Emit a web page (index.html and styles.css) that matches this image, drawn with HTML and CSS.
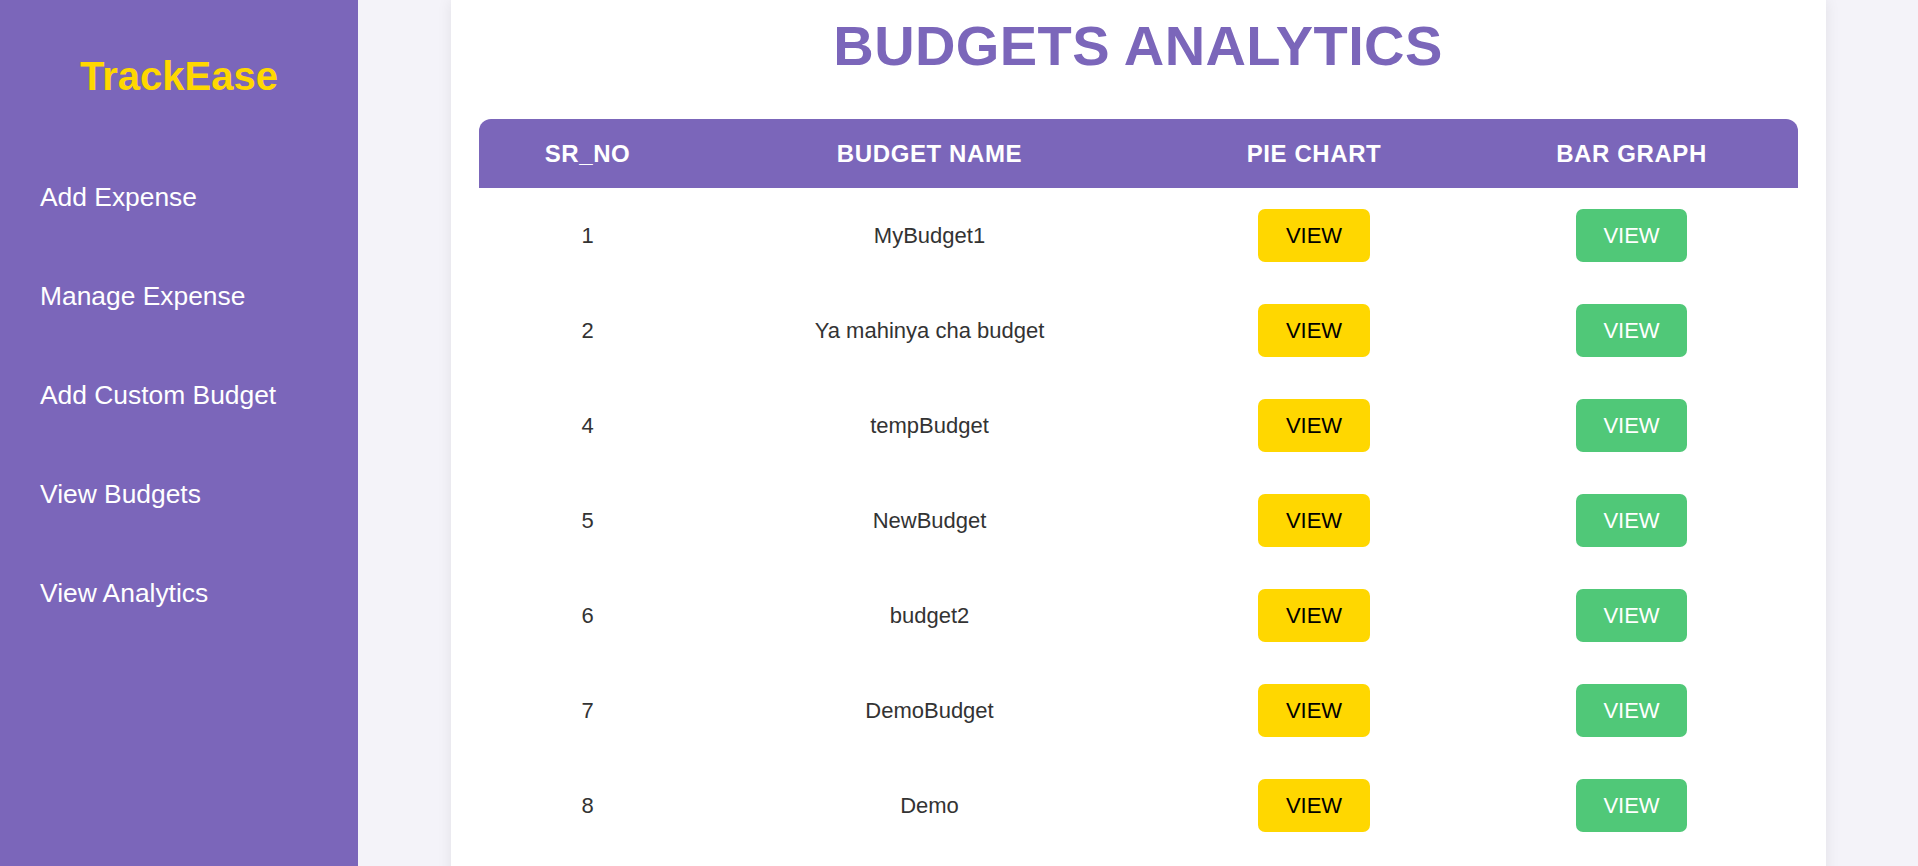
FILE: index.html
```html
<!DOCTYPE html>
<html lang="en">
<head>
<meta charset="UTF-8">
<title>TrackEase - Budgets Analytics</title>
<link rel="stylesheet" href="styles.css">
</head>
<body>
<div class="layout">
  <aside class="sidebar">
    <h2 class="logo">TrackEase</h2>
    <nav class="nav">
      <a href="#">Add Expense</a>
      <a href="#">Manage Expense</a>
      <a href="#">Add Custom Budget</a>
      <a href="#">View Budgets</a>
      <a href="#">View Analytics</a>
    </nav>
  </aside>
  <main class="main">
    <section class="card">
      <h1 class="title">BUDGETS ANALYTICS</h1>
      <table class="budget-table">
        <colgroup>
          <col class="c1"><col class="c2"><col class="c3"><col class="c4">
        </colgroup>
        <thead>
          <tr><th>SR_NO</th><th>BUDGET NAME</th><th>PIE CHART</th><th>BAR GRAPH</th></tr>
        </thead>
        <tbody>
          <tr><td>1</td><td>MyBudget1</td><td><button class="btn btn-pie">VIEW</button></td><td><button class="btn btn-bar">VIEW</button></td></tr>
          <tr><td>2</td><td>Ya mahinya cha budget</td><td><button class="btn btn-pie">VIEW</button></td><td><button class="btn btn-bar">VIEW</button></td></tr>
          <tr><td>4</td><td>tempBudget</td><td><button class="btn btn-pie">VIEW</button></td><td><button class="btn btn-bar">VIEW</button></td></tr>
          <tr><td>5</td><td>NewBudget</td><td><button class="btn btn-pie">VIEW</button></td><td><button class="btn btn-bar">VIEW</button></td></tr>
          <tr><td>6</td><td>budget2</td><td><button class="btn btn-pie">VIEW</button></td><td><button class="btn btn-bar">VIEW</button></td></tr>
          <tr><td>7</td><td>DemoBudget</td><td><button class="btn btn-pie">VIEW</button></td><td><button class="btn btn-bar">VIEW</button></td></tr>
          <tr><td>8</td><td>Demo</td><td><button class="btn btn-pie">VIEW</button></td><td><button class="btn btn-bar">VIEW</button></td></tr>
        </tbody>
      </table>
    </section>
  </main>
</div>
</body>
</html>
```

FILE: styles.css
```css
* { box-sizing: border-box; }

html, body {
  margin: 0;
  padding: 0;
  height: 100%;
  overflow: hidden;
}

body {
  font-family: "Liberation Sans", Arial, sans-serif;
  background: #f4f3f9;
  color: #333;
}

.layout {
  display: flex;
  height: 866px;
}

.sidebar {
  width: 358px;
  flex: 0 0 358px;
  background: #7b66ba;
  padding-top: 53px;
}

.logo {
  margin: 0 0 83px;
  text-align: center;
  color: #ffd700;
  font-size: 40px;
  font-weight: bold;
  line-height: 46px;
}

.nav {
  display: flex;
  flex-direction: column;
  gap: 69px;
}

.nav a {
  display: block;
  padding-left: 40px;
  color: #fff;
  text-decoration: none;
  font-size: 26.4px;
  line-height: 30px;
}

.main {
  flex: 1;
  display: flex;
  justify-content: center;
  align-items: flex-start;
}

.card {
  width: 1375px;
  min-height: 900px;
  background: #fff;
  padding: 14px 28px 28px;
  box-shadow: 0 0 14px rgba(0, 0, 0, 0.08);
}

.title {
  margin: 0 0 41px;
  text-align: center;
  color: #7b66ba;
  font-size: 56px;
  font-weight: bold;
  letter-spacing: 0.4px;
  line-height: 64px;
}

.budget-table {
  width: 1319px;
  border-collapse: separate;
  border-spacing: 0;
  table-layout: fixed;
}

.c1 { width: 218px; }
.c2 { width: 466px; }
.c3 { width: 303px; }
.c4 { width: 332px; }

.budget-table th {
  background: #7b66ba;
  color: #fff;
  font-size: 24px;
  font-weight: bold;
  letter-spacing: 0.6px;
  line-height: 28px;
  padding: 20.5px 10px 20px;
  text-align: center;
}

.budget-table th:first-child { border-top-left-radius: 12px; }
.budget-table th:last-child { border-top-right-radius: 12px; }

.budget-table td {
  text-align: center;
  font-size: 22px;
  color: #333;
  padding: 21px 10px;
  line-height: 25px;
}

.btn {
  font-family: "Liberation Sans", Arial, sans-serif;
  font-size: 22px;
  line-height: 25px;
  padding: 14px 27.5px;
  border: none;
  border-radius: 7px;
  cursor: pointer;
  vertical-align: middle;
}

.btn-pie {
  background: #ffd700;
  color: #000;
}

.btn-bar {
  background: #50c878;
  color: #fff;
}
```
